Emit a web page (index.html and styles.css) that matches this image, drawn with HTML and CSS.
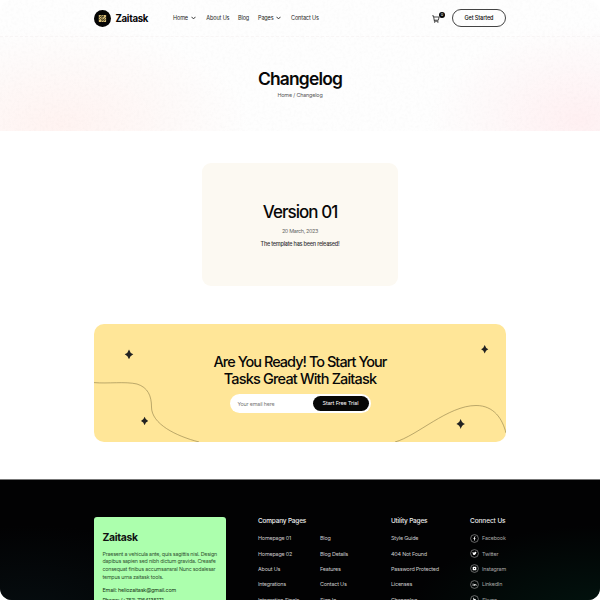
FILE: index.html
```html
<!DOCTYPE html>
<html lang="en">
<head>
<meta charset="utf-8">
<title>Changelog - Zaitask</title>
<link rel="stylesheet" href="styles.css">
</head>
<body>
<div class="page">
  <div class="hero">
    <svg class="grain" width="600" height="131" aria-hidden="true"><filter id="noise"><feTurbulence type="fractalNoise" baseFrequency="0.35" numOctaves="2" seed="4"/><feColorMatrix values="0 0 0 0 0.4  0 0 0 0 0.4  0 0 0 0 0.4  0.9 0 0 0 -0.38"/></filter><rect width="600" height="131" filter="url(#noise)"/></svg>
    <header class="header">
      <a class="brand">
        <svg width="17" height="17" viewBox="0 0 17 17"><circle cx="8.5" cy="8.5" r="8.5" fill="#050505"/><rect x="4.8" y="5" width="7.3" height="7" rx=".6" fill="#d9bf78"/><path d="M5.2 7.7 7.7 5.4M5.2 9.8 9.8 5.4M7 11.7 11.8 7.2M9.4 11.7l2.4-2.3M5.8 6.2h4L7 9.9h4" fill="none" stroke="#1b180e" stroke-width=".65"/></svg>
        <span>Zaitask</span>
      </a>
      <nav class="nav">
        <a class="home">Home <svg width="5" height="4" viewBox="0 0 5 4"><path d="M.5.8 2.5 2.9 4.5.8"/></svg></a>
        <a class="about">About Us</a>
        <a class="blog">Blog</a>
        <a class="pages">Pages <svg width="5" height="4" viewBox="0 0 5 4"><path d="M.5.8 2.5 2.9 4.5.8"/></svg></a>
        <a class="contact">Contact Us</a>
      </nav>
      <a class="cart">
        <svg width="8" height="8" viewBox="0 0 8 8"><path d="M.2.8h1.3l.7 4.4h4.1L7.1 2H1.8M2.3 5.2v1h4" fill="none" stroke="#111" stroke-width=".75"/><circle cx="2.7" cy="7.1" r=".6" fill="#111"/><circle cx="5.9" cy="7.1" r=".6" fill="#111"/></svg>
        <span class="badge">0</span>
      </a>
      <a class="get">Get Started</a>
    </header>
    <h1>Changelog</h1>
    <p class="crumb">Home / Changelog</p>
  </div>

  <main>
    <section class="version">
      <h2>Version 01</h2>
      <p class="date">20 March, 2023</p>
      <p class="note">The template has been released!</p>
    </section>

    <section class="cta">
      <svg class="art" width="412" height="118" viewBox="0 0 412 118" aria-hidden="true">
        <path class="curve" d="M0 58.6C14 59.8 31 57.3 43 60C54 63.500 57.5 72 57.5 83C57.5 100 82 112 105 118"/>
        <path class="curve" d="M301 118C323 112 354 81.5 382 81.5C400 81.5 408.5 95 412 109"/>
        <g fill="#222">
          <path d="M35 25.4Q36 29 39.3 30.3Q36 31.8 35 35.2Q34 31.8 30.7 30.3Q34 29 35 25.4Z"/>
          <path d="M50.6 92.8Q51.5 96 54.2 97Q51.5 98.1 50.6 101.2Q49.7 98.1 47 97Q49.7 96 50.6 92.8Z"/>
          <path d="M390.7 21Q391.6 24.2 394.3 25.3Q391.6 26.4 390.7 29.5Q389.8 26.4 387.1 25.3Q389.8 24.2 390.7 21Z"/>
          <path d="M366.7 95Q367.7 98.8 371 100Q367.7 101.2 366.7 105Q365.7 101.2 362.4 100Q365.7 98.8 366.7 95Z"/>
        </g>
      </svg>
      <h2><span class="l1">Are You Ready! To Start Your</span><br><span class="l2">Tasks Great With Zaitask</span></h2>
      <form class="signup">
        <span class="placeholder">Your email here</span>
        <span class="trial">Start Free Trial</span>
      </form>
    </section>
  </main>

  <footer class="footer">
    <div class="about-card">
      <h3>Zaitask</h3>
      <p class="bio">Praesent a vehicula ante, quis sagittis nisl. Design<br>dapibus sapien sed nibh dictum gravida. Creasfe<br>consequat finibus accumsansral Nunc sodalesar<br>tempus urna zaitask tools.</p>
      <p class="line">Email: heliozaitask@gmail.com</p>
      <p class="line">Phone: (+751) 7164135171</p>
    </div>
    <div class="col company">
      <h4>Company Pages</h4>
      <div class="pair">
        <ul><li>Homepage 01</li><li>Homepage 02</li><li>About Us</li><li>Integrations</li><li>Integration Single</li></ul>
        <ul><li>Blog</li><li>Blog Details</li><li>Features</li><li>Contact Us</li><li>Sign In</li></ul>
      </div>
    </div>
    <div class="col utility">
      <h4>Utility Pages</h4>
      <ul><li>Style Guide</li><li>404 Not Found</li><li>Password Protected</li><li>Licenses</li><li>Changelog</li></ul>
    </div>
    <div class="col connect">
      <h4>Connect Us</h4>
      <ul>
        <li><svg viewBox="0 0 9 9"><circle class="ring" cx="4.5" cy="4.5" r="3.9"/><path d="M4.1 6.6V4.8h-.7V4h.7v-.6c0-.7.4-1.1 1.4-1v.7c-.5 0-.6.1-.6.4V4h.6l-.1.8h-.5v1.8z"/></svg>Facebook</li>
        <li><svg viewBox="0 0 9 9"><circle class="ring" cx="4.5" cy="4.5" r="3.9"/><path d="M2.7 3c.5.5 1 .8 1.7.8 0-1.2 1.1-1.4 1.6-.8l.5-.1-.3.6c0 1.9-1.7 3.1-3.6 2.4.5 0 .8-.1 1-.4-.5 0-.7-.4-.8-.7h.2c-.4-.3-.6-.9-.3-1.8z"/></svg>Twitter</li>
        <li><svg viewBox="0 0 9 9"><circle class="ring" cx="4.5" cy="4.5" r="3.9"/><path fill-rule="evenodd" d="M3.3 2.7h2.4q.6 0 .6.6v2.4q0 .6-.6.6H3.3q-.6 0-.6-.6V3.3q0-.6.6-.6zM4.5 3.9a.6.6 0 1 0 0 1.2.6.6 0 1 0 0-1.2z"/></svg>Instagram</li>
        <li><svg viewBox="0 0 9 9"><circle class="ring" cx="4.5" cy="4.5" r="3.9"/><path d="M2.7 4h.7v2.1h-.7zM2.7 3h.7v.6h-.7zM3.9 4h.7v.3c.5-.6 1.8-.5 1.8.6v1.2h-.7V5c0-.6-1-.6-1 0v1.1h-.8z"/></svg>LinkedIn</li>
        <li><svg viewBox="0 0 9 9"><circle class="ring" cx="4.5" cy="4.5" r="3.9"/><path d="M3.3 2.7h.7v1.2q1.9-.3 1.9 1.1t-1.9 1.2h-.7z"/></svg>Skype</li>
      </ul>
    </div>
  </footer>
</div>
</body>
</html>
```
FILE: styles.css
```css
* { box-sizing: border-box; margin: 0; padding: 0; }
html { background: #fff; }
body { width: 600px; height: 600px; overflow: hidden; background: #fff; font-family: Inter, "Liberation Sans", sans-serif; color: #080808; }
.page { width: 600px; height: 600px; overflow: hidden; border-radius: 12px; background: #fff; }
h1, h2, h3, h4 { font-weight: 500; }
p, h1, h2, h3, h4, a, li { white-space: nowrap; }
ul { list-style: none; }
svg { display: block; flex: none; }

.hero {
  position: relative; height: 131px; text-align: center;
  background: radial-gradient(ellipse 150px 95px at 580px 120px, #fff0f2, #fff0f200), radial-gradient(ellipse 190px 100px at 60px 125px, #fff3f1, #fff3f100), #fefefe;
}
.grain { position: absolute; inset: 0; opacity: .1; }
.header { position: relative; height: 37px; padding: 0 94px; display: flex; align-items: center; border-bottom: 1px dashed #f8f5f5; }
.brand { display: flex; align-items: center; gap: 4.5px; width: 79px; font-size: 9.7px; font-weight: 700; letter-spacing: -.35px; }
.nav { display: flex; flex: 1; font-size: 5.5px; letter-spacing: -.12px; color: #222; }
.nav a { display: flex; align-items: center; gap: 3px; }
.nav path { fill: none; stroke: #222; stroke-width: .9; }
.home { width: 33.3px; }
.about { width: 31.7px; }
.blog { width: 20px; }
.pages { width: 33px; }
.cart { position: relative; width: 20px; padding-top: 1.5px; }
.badge { position: absolute; left: 7px; top: -1px; width: 6px; height: 6px; border-radius: 50%; background: #050505; color: #fff; font-size: 4px; line-height: 6px; text-align: center; }
.get { width: 54px; height: 18px; border: 1px solid #444; border-radius: 9px; font-size: 5.5px; font-weight: 500; line-height: 16.5px; letter-spacing: -.1px; }
h1 { position: relative; padding-top: 30px; font-size: 17.4px; line-height: 23px; font-weight: 600; letter-spacing: -.8px; }
.crumb { position: relative; padding-top: 1px; font-size: 5.4px; line-height: 8px; letter-spacing: -.16px; color: #555; }

main { display: flex; flex-direction: column; align-items: center; height: 348px; padding-top: 32px; }
.version { width: 196px; height: 123px; padding-top: 37px; border-radius: 9px; background: #fcf9f2; text-align: center; }
.version h2 { font-size: 17px; line-height: 24px; letter-spacing: -.97px; }
.date { margin-top: 2.5px; font-size: 5.4px; line-height: 8px; letter-spacing: -.32px; color: #666; }
.note { margin-top: 5.5px; font-size: 5.5px; line-height: 8px; font-weight: 500; letter-spacing: -.22px; color: #333; }
.cta { position: relative; width: 412px; height: 118px; margin-top: 38px; padding-top: 29px; border-radius: 10px; overflow: hidden; background: #ffe698; }
.art { position: absolute; left: 0; top: 0; }
.curve { fill: none; stroke: #9d8c55; stroke-width: .7; }
.cta h2 { position: relative; text-align: center; font-size: 14.5px; line-height: 17.3px; letter-spacing: -.97px; }
.cta .l2 { letter-spacing: -.82px; }
.signup { position: relative; display: flex; align-items: center; justify-content: space-between; width: 141px; height: 19px; margin: 6.5px auto 0; padding: 0 2px 0 8px; border-radius: 10px; background: #fff; }
.placeholder { font-size: 5.4px; letter-spacing: -.18px; color: #777; }
.trial { width: 56px; height: 15.5px; border-radius: 8px; background: #070707; color: #fff; text-align: center; font-size: 5.4px; line-height: 15.5px; letter-spacing: -.1px; }

.footer { display: flex; align-items: flex-start; height: 160px; padding: 37px 0 0 94px; border-top: 1px solid #777; background: radial-gradient(ellipse 190px 90px at 600px 135px, #02140f, #02140f00), radial-gradient(ellipse 180px 90px at 30px 135px, #060d10, #060d1000), #020203; color: #ccc; }
.about-card { width: 132px; height: 150px; margin-right: 32px; padding: 14px 8.5px; border-radius: 3px; background: #acffad; color: #111; }
.about-card h3 { font-size: 10.4px; line-height: 14px; font-weight: 700; letter-spacing: -.33px; }
.bio { margin-top: 5.5px; font-size: 5.3px; line-height: 7.75px; letter-spacing: -.19px; color: #315331; }
.line { margin-top: 4.2px; font-size: 5.4px; line-height: 8px; letter-spacing: -.16px; color: #173617; }
.line + .line { margin-top: 2.3px; }
.col { flex: none; font-size: 5.4px; letter-spacing: -.18px; }
.col h4 { font-size: 6.5px; line-height: 8px; letter-spacing: -.2px; color: #eee; }
.connect h4 { letter-spacing: -.08px; }
.col ul { margin-top: 5.5px; }
.col li { display: flex; align-items: center; height: 15.4px; }
.company { width: 133px; }
.utility { width: 79px; }
.pair { display: flex; }
.pair ul:first-child { width: 62px; }
.connect li { gap: 3px; color: #aaa; letter-spacing: -.16px; }
.connect svg { width: 9px; height: 9px; fill: #fff; }
.connect svg .ring { fill: none; stroke: #aaa; stroke-width: .6; }
```
